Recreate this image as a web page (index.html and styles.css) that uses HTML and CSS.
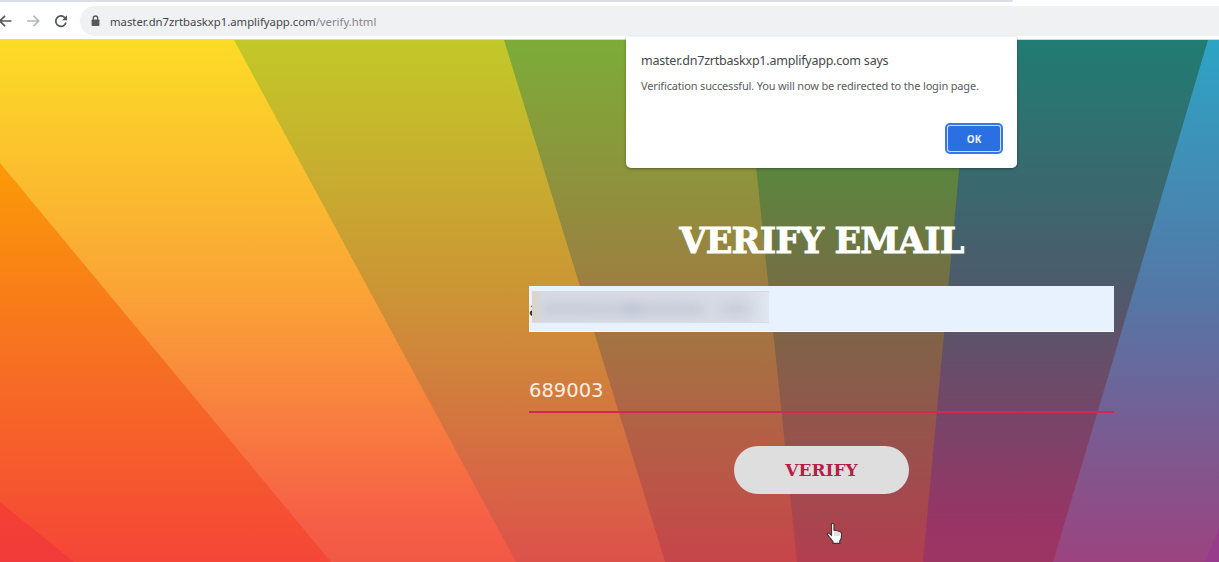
FILE: index.html
```html
<!DOCTYPE html>
<html lang="en">
<head>
<meta charset="utf-8">
<title>Verify Email</title>
<link rel="stylesheet" href="styles.css">
</head>
<body>
<div class="browser">
  <header class="chrome">
    <div class="tabstrip"></div>
    <div class="toolbar">
      <svg class="nav" width="76" height="24" viewBox="0 0 76 24" fill="none" stroke-width="1.7">
        <path d="M11.500 12H0M5 6.800L-.2 12L5 17.200" stroke="#55585c"/>
        <path d="M27 12H38.500M33.500 6.800L38.700 12L33.500 17.200" stroke="#b5b7ba"/>
        <path d="M64.800 8.600A5.200 5.200 0 1 0 66 13.600" stroke="#505357"/>
        <path d="M67 6.300V11.200H62.100Z" fill="#505357"/>
      </svg>
      <div class="address">
        <svg class="lock" width="9" height="12" viewBox="0 0 9 12"><path d="M2.300 5V3.200a2.200 2.200 0 0 1 4.400 0V5" fill="none" stroke="#55585c" stroke-width="1.300"/><rect x=".6" y="4.400" width="7.800" height="6.600" rx=".8" fill="#55585c"/></svg>
        <span class="url">master.dn7zrtbaskxp1.amplifyapp.com<span class="path">/verify.html</span></span>
      </div>
    </div>
  </header>
  <main class="page">
    <svg class="rays" width="1219" height="522" viewBox="0 40 1219 522">
      <defs>
        <linearGradient id="red" gradientUnits="userSpaceOnUse" x1="0" y1="502" x2="0" y2="562"><stop stop-color="#f54033"/><stop offset="1" stop-color="#f13a3b"/></linearGradient>
        <linearGradient id="orange" gradientUnits="userSpaceOnUse" x1="0" y1="163" x2="0" y2="562"><stop stop-color="#fb9a06"/><stop offset=".55" stop-color="#f66b25"/><stop offset="1" stop-color="#f54637"/></linearGradient>
        <linearGradient id="yellow" gradientUnits="userSpaceOnUse" x1="0" y1="40" x2="0" y2="562"><stop stop-color="#fcdc26"/><stop offset=".48" stop-color="#faa436"/><stop offset=".92" stop-color="#f65f47"/><stop offset="1" stop-color="#f15846"/></linearGradient>
        <linearGradient id="lime" gradientUnits="userSpaceOnUse" x1="0" y1="40" x2="0" y2="562"><stop stop-color="#c2c928"/><stop offset=".48" stop-color="#cc9535"/><stop offset="1" stop-color="#dc524b"/></linearGradient>
        <linearGradient id="green" gradientUnits="userSpaceOnUse" x1="0" y1="40" x2="0" y2="562"><stop stop-color="#7cac38"/><stop offset=".46" stop-color="#9b8040"/><stop offset="1" stop-color="#c7454a"/></linearGradient>
        <linearGradient id="forest" gradientUnits="userSpaceOnUse" x1="0" y1="168" x2="0" y2="562"><stop stop-color="#5b863e"/><stop offset=".46" stop-color="#836149"/><stop offset="1" stop-color="#b23e50"/></linearGradient>
        <linearGradient id="teal" gradientUnits="userSpaceOnUse" x1="0" y1="40" x2="0" y2="562"><stop stop-color="#207c73"/><stop offset=".46" stop-color="#4c5b6c"/><stop offset=".92" stop-color="#973565"/><stop offset="1" stop-color="#9d3562"/></linearGradient>
        <linearGradient id="blue" gradientUnits="userSpaceOnUse" x1="0" y1="40" x2="0" y2="562"><stop stop-color="#2da4c5"/><stop offset=".5" stop-color="#5576a6"/><stop offset="1" stop-color="#9c437f"/></linearGradient>
      </defs>
      <path d="M0 40H1219V562H0Z" fill="url(#blue)"/>
      <path d="M0 40H1208L1053 562H0Z" fill="url(#teal)"/>
      <path d="M0 40H971L923 562H0Z" fill="url(#forest)"/>
      <path d="M0 40H743L797 562H0Z" fill="url(#green)"/>
      <path d="M0 40H504L665 562H0Z" fill="url(#lime)"/>
      <path d="M0 40H234L516 562H0Z" fill="url(#yellow)"/>
      <path d="M0 163L331 562H0Z" fill="url(#orange)"/>
      <path d="M0 502L74 562H0Z" fill="url(#red)"/>
      <path d="M1219 528L1205 562H1219Z" fill="#993b8d"/>
    </svg>
    <form class="form">
      <h1 class="title"><span>VERIFY EMAIL</span></h1>
      <div class="field email"><span class="initial">a</span><span class="redacted"><i class="smudge"></i></span></div>
      <div class="field code"><span>689003</span></div>
      <button class="submit" type="button"><span>VERIFY</span></button>
    </form>
  </main>
  <section class="dialog" role="alertdialog">
    <h2 class="origin"><span>master.dn7zrtbaskxp1.amplifyapp.com says</span></h2>
    <p class="message"><span>Verification successful. You will now be redirected to the login page.</span></p>
    <button class="ok" type="button">OK</button>
  </section>
  <svg class="pointer" width="18" height="24" viewBox="0 0 18 24"><path d="M5.500 2.500C5.500.8 8 .8 8 2.500V8.200L9.600 8.500L12 9L14.500 10Q15.700 10.500 15.600 12.500L15.200 16.500L13.800 19V21.300H7V19.600L4 16L1.600 12.700C.8 11.300 2.300 10.500 3.500 11.600L5.500 13.200Z" fill="#fff" stroke="#493336" stroke-width="1.200"/><path d="M8 4.500V9L14 10.500V14H8Z" fill="#c9c9c9" opacity=".55"/></svg>
</div>
</body>
</html>
```
FILE: styles.css
```css
* { box-sizing: border-box; }
body { margin: 0; background: #fff; font-family: "Noto Sans", "Open Sans", sans-serif; }
.browser { position: relative; width: 1219px; height: 562px; overflow: hidden; display: flex; flex-direction: column; }
.chrome { height: 40px; flex: none; background: #fff; border-bottom: 1px solid #d3d5cf; }
.tabstrip { height: 2px; width: 1013px; background: #dcdee7; border-bottom-right-radius: 2px; }
.toolbar { display: flex; align-items: center; padding-top: 4px; }
.nav { flex: none; margin-right: 4px; overflow: visible; }
.address { flex: 1; height: 30px; display: flex; align-items: center; gap: 10px; padding-left: 11px; background: #f0f1f3; border-radius: 15px 0 0 15px; }
.url { font-size: 11.3px; color: #45474a; white-space: nowrap; }
.path { color: #85878a; }
.page { display: grid; flex: 1; }
.rays, .form { grid-area: 1 / 1; }
.rays { display: block; }
.form { width: 585px; margin-left: 529px; padding-top: 177px; display: flex; flex-direction: column; align-items: center; z-index: 1; }
.title { margin: 0; height: 48px; line-height: 48px; font-family: "DejaVu Serif", serif; font-size: 35px; font-weight: 700; letter-spacing: -.9px; color: #fff; -webkit-text-stroke: .9px #fff; white-space: nowrap; }
.field { width: 100%; height: 46px; display: flex; align-items: center; }
.email { margin-top: 21px; background: #e8f1fe; border-bottom: 1px solid #fff; }
.initial { font-size: 20px; line-height: 28px; width: 12px; margin-right: -9px; color: #222; }
.redacted { z-index: 1; width: 237px; height: 32px; margin-top: -3px; overflow: hidden; display: flex; align-items: center; background: linear-gradient(90deg, #ddd3c8, #d5dae5 5%, #d7dce7 90%, #e0e7f2); border-top: 1px solid #ddd8d3; border-bottom: 1px solid #dddce3; }
.smudge { width: 215px; height: 14px; margin: 3px 0 0 10px; filter: blur(5px); background: linear-gradient(90deg, #c9ceda 0 35%, #bfc5d2 42%, #c8cdd9 48% 73%, #d8dce6 78%, #c6cbd8 90%, #d6dbe6); }
.code { margin-top: 34px; height: 47px; padding-top: 3px; border-bottom: 2px solid #d12750; font-family: "DejaVu Sans", sans-serif; font-size: 19.500px; color: #fbeee5; }
.submit { width: 175px; height: 48px; margin-top: 33px; padding: 0; border: 0; border-radius: 24px; background: #dedede; color: #b51e49; font: 700 17px "DejaVu Serif", serif; }
.dialog { position: absolute; left: 626px; top: 37px; width: 391px; height: 131px; padding: 14px 15px; background: #fff; border-radius: 0 0 5px 5px; box-shadow: 0 1px 3px rgba(0,0,0,.35); display: flex; flex-direction: column; }
.origin { margin: 0; font-size: 12.500px; letter-spacing: -.22px; line-height: 20px; font-weight: 400; color: #46484b; white-space: nowrap; }
.message { margin: 6px 0 0; font-size: 11px; letter-spacing: -.16px; line-height: 18px; color: #5a5c60; white-space: nowrap; }
.ok { align-self: flex-end; width: 54px; height: 27px; margin: 30px 1px 0 0; padding: 0; border: 1px solid #cbdcfb; border-radius: 3px; outline: 2px solid #3878e6; outline-offset: 0; background: #2b70e2; color: #e8f0ff; font: 700 10px "Noto Sans", sans-serif; }
.pointer { position: absolute; left: 826px; top: 522px; }
```
